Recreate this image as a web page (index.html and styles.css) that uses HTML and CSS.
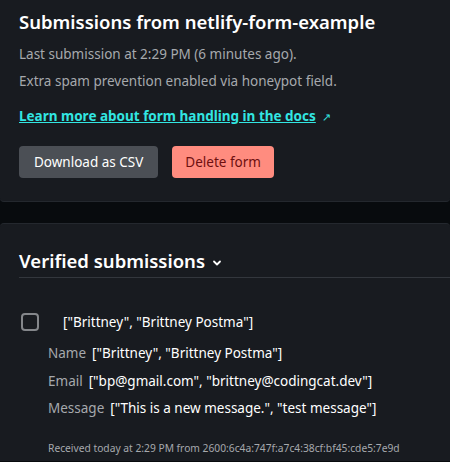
FILE: index.html
```html
<!DOCTYPE html>
<html lang="en">
<head>
  <meta charset="UTF-8">
  <title>Submissions</title>
  <link rel="stylesheet" href="styles.css">
</head>
<body>
  <!-- Form summary -->
  <section class="card summary">
    <h1>Submissions from netlify-form-example</h1>
    <p class="muted">Last submission at 2:29 PM (6 minutes ago).</p>
    <p class="muted">Extra spam prevention enabled via honeypot field.</p>
    <p class="doc-link">
      <a href="#">Learn more about form handling in the docs</a>
      <span class="ext">&#8599;</span>
    </p>
    <div class="actions">
      <button class="btn btn-secondary">Download as CSV</button>
      <button class="btn btn-danger">Delete form</button>
    </div>
  </section>

  <!-- Submissions list -->
  <section class="card list">
    <h2 class="list-title">Verified submissions
      <svg class="chevron" width="10" height="10" viewBox="0 0 10 10"><path d="M2 3.5 L5 6.5 L8 3.5" fill="none" stroke="#fff" stroke-width="1.8" stroke-linecap="round" stroke-linejoin="round"/></svg>
    </h2>

    <div class="submission">
      <div class="sub-head">
        <span class="check"></span>
        <span class="sub-title">["Brittney", "Brittney Postma"]</span>
      </div>
      <dl class="fields">
        <div class="field"><dt>Name</dt><dd>["Brittney", "Brittney Postma"]</dd></div>
        <div class="field"><dt>Email</dt><dd>["bp@gmail.com", "brittney@codingcat.dev"]</dd></div>
        <div class="field"><dt>Message</dt><dd>["This is a new message.", "test message"]</dd></div>
      </dl>
      <p class="received">Received today at 2:29 PM from 2600:6c4a:747f:a7c4:38cf:bf45:cde5:7e9d</p>
    </div>
  </section>
</body>
</html>
```

FILE: styles.css
```css
/* Reset */
body, html {
  margin: 0;
  padding: 0;
  background: #080b0e;
  font-family: "Noto Sans", "Open Sans", Arial, sans-serif;
  color: #ffffff;
}

.card {
  background: #181b20;
  padding: 0 19px;
}

/* Summary card */
.summary {
  padding-top: 6px;
  padding-bottom: 23px;
  border-bottom: 1px solid #24282e;
  border-radius: 0 0 4px 4px;
}

.summary h1 {
  margin: 0 0 3px;
  font-size: 18.5px;
  font-weight: 600;
  line-height: 32px;
}

.muted {
  margin: 0;
  font-size: 13.5px;
  line-height: 27px;
  color: #a6a9ad;
}

.doc-link {
  margin: 11px 0 0;
  font-size: 13.5px;
  line-height: 20px;
}

.doc-link a {
  color: #32e6e2;
  font-weight: 700;
  text-decoration: underline;
}

.ext {
  color: #32e6e2;
  font-size: 11px;
  margin-left: 3px;
}

.actions {
  display: flex;
  gap: 14px;
  margin-top: 19px;
}

.btn {
  height: 32px;
  padding: 0 15px;
  border: none;
  border-radius: 4px;
  font-family: inherit;
  font-size: 13.5px;
}

.btn-secondary {
  background: #4b4f55;
  color: #ffffff;
}

.btn-danger {
  padding: 0 13px;
  background: #ff8c7f;
  color: #6e1010;
}

/* List card */
.list {
  margin-top: 21px;
  padding-top: 23px;
  padding-bottom: 6px;
  border-top: 1px solid #24282e;
  border-radius: 4px 4px 0 0;
}

.list-title {
  margin: 0 -19px 0 0;
  padding-bottom: 2px;
  border-bottom: 1px solid #33373d;
  font-size: 18.5px;
  font-weight: 600;
  line-height: 28px;
}

.chevron {
  margin-left: 2px;
}

.submission {
  padding-top: 35px;
}

.sub-head {
  display: flex;
  align-items: center;
  gap: 24px;
  padding-left: 2px;
}

.check {
  width: 14px;
  height: 14px;
  border: 2px solid #84878b;
  border-radius: 4px;
}

.sub-title {
  font-size: 13.5px;
}

.fields {
  margin: 9px 0 0;
  padding-left: 29px;
}

.field {
  display: flex;
  gap: 6px;
  font-size: 13.5px;
  line-height: 27.5px;
}

.field dt {
  color: #a6a9ad;
}

.field dd {
  margin: 0;
}

.received {
  margin: 18px 0 0 29px;
  font-size: 10.25px;
  color: #a6a9ad;
}
```
